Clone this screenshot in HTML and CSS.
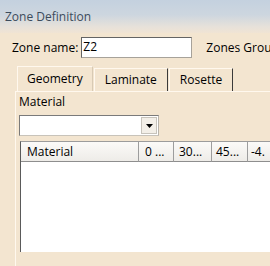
FILE: index.html
```html
<!DOCTYPE html>
<html>
<head>
<meta charset="utf-8">
<link rel="stylesheet" href="styles.css">
</head>
<body>
<div class="window">
  <div class="title">Zone Definition</div>
  <div class="content">
    <div class="name-row">
      <span class="lbl">Zone name:</span>
      <div class="input">Z2</div>
      <span class="lbl groups">Zones Grou</span>
    </div>
    <div class="tabframe">
      <div class="tabs">
        <div class="tab active">Geometry</div>
        <div class="tab">Laminate</div>
        <div class="tab">Rosette</div>
      </div>
      <div class="panel">
        <div class="lbl mat">Material</div>
        <div class="combo">
          <div class="combo-field"></div>
          <div class="combo-btn"><svg width="7" height="4" viewBox="0 0 7 4"><path d="M0 0H7L3.5 4Z" fill="#000"/></svg></div>
        </div>
        <div class="table">
          <div class="thead">
            <div class="th c1">Material</div>
            <div class="th c2">0 ...</div>
            <div class="th c3">30...</div>
            <div class="th c4">45...</div>
            <div class="th c5">-4.</div>
          </div>
        </div>
      </div>
    </div>
  </div>
</div>
</body>
</html>
```
FILE: styles.css
```css
html, body {
  margin: 0;
  padding: 0;
  width: 270px;
  height: 266px;
  overflow: hidden;
  background: #f3e5d0;
}
.window {
  font-family: "Open Sans", "Liberation Sans", sans-serif;
  font-size: 12px;
  color: #000;
  width: 270px;
  height: 266px;
  overflow: hidden;
}
.title {
  height: 33px;
  box-sizing: border-box;
  padding: 8px 0 0 5px;
  color: #3c4b5c;
  background: linear-gradient(#c4d1df 0%, #cdd6df 45%, #e6e1da 80%, #f0e4d4 100%);
  white-space: nowrap;
}
.content {
  padding: 4px 0 0 0;
}
.name-row {
  display: flex;
  align-items: center;
  height: 21px;
  padding-left: 12px;
  white-space: nowrap;
}
.name-row > * {
  flex: none;
}
.lbl {
  white-space: nowrap;
}
.input {
  margin-left: 3px;
  width: 111px;
  height: 21px;
  box-sizing: border-box;
  background: #fff;
  border: 1px solid #a7a29a;
  border-top-color: #646464;
  border-left-color: #646464;
  padding-left: 1px;
  line-height: 18px;
}
.groups {
  margin-left: 14px;
}
.tabframe {
  margin-top: 8px;
  margin-left: 15px;
}
.tabs {
  display: flex;
  padding-left: 3px;
  height: 25px;
  align-items: flex-end;
}
.tab {
  height: 23px;
  box-sizing: border-box;
  padding: 0 10px;
  line-height: 21px;
  border-top: 1px solid #fff8ee;
  border-left: 1px solid #fff8ee;
  border-right: 1px solid #3a3a3a;
  background: #f3e5d0;
  margin-right: 1px;
  flex: none;
}
.tab.active {
  height: 25px;
  line-height: 23px;
  border-right-color: #d8cab4;
  margin-left: -1px;
  padding: 0 9px;
}
.panel {
  border-top: 1px solid #fff8ee;
  border-left: 1px solid #fff8ee;
  padding: 2px 0 0 3px;
  height: 200px;
}
.mat {
  line-height: 16px;
}
.combo {
  margin-top: 5px;
  width: 140px;
  height: 21px;
  box-sizing: border-box;
  border: 1px solid #7a7a7a;
  border-right-color: #b9b4ab;
  border-bottom-color: #c8c3ba;
  background: #fff;
  display: flex;
  justify-content: flex-end;
  padding: 1px;
}
.combo-btn {
  width: 16px;
  height: 17px;
  box-sizing: border-box;
  background: #f3efe8;
  border: 1px solid #c7c3bb;
  display: flex;
  align-items: center;
  justify-content: center;
}
.table {
  margin-top: 5px;
  margin-left: 1px;
  width: 260px;
  height: 110px;
  background: #fff;
  border-left: 1px solid #5a5a5a;
  border-top: 1px solid #9c9c9c;
}
.thead {
  display: flex;
  height: 20px;
  white-space: nowrap;
}
.th {
  box-sizing: border-box;
  height: 20px;
  line-height: 19px;
  padding-left: 6px;
  background: linear-gradient(#fbfaf8, #eeece8);
  border-right: 1px solid #9d9d9d;
  border-bottom: 1px solid #8e8e8e;
  overflow: hidden;
  flex: none;
}
.c1 { width: 118px; }
.c2 { width: 35px; padding-left: 6px; }
.c3 { width: 38px; padding-left: 5px; }
.c4 { width: 36px; padding-left: 4px; }
.c5 { width: 30px; padding-left: 3px; }
```
